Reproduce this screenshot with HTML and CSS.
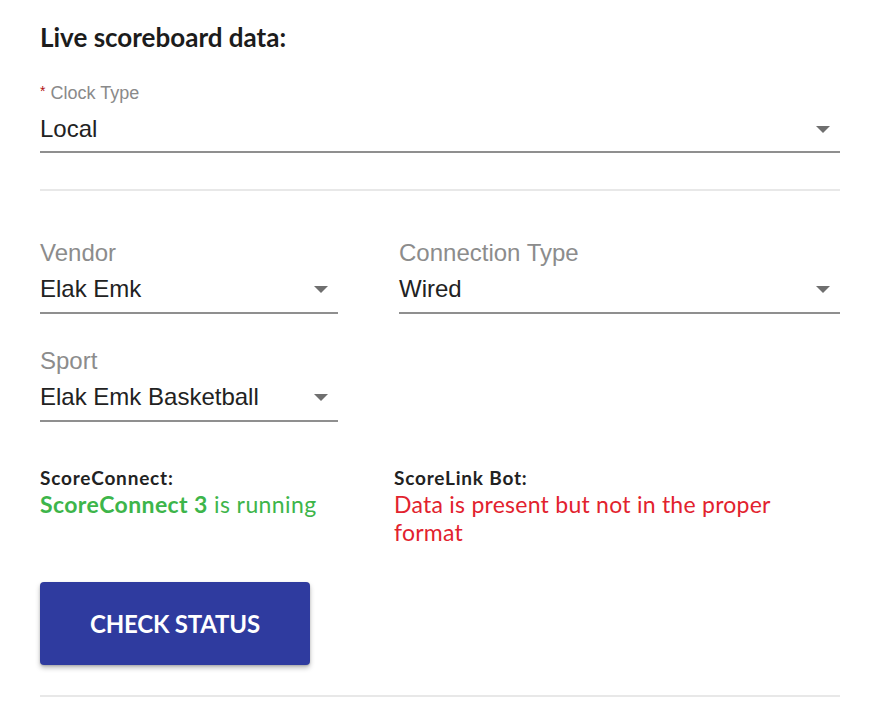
FILE: index.html
```
<!DOCTYPE html>
<html lang="en">
<head>
<meta charset="utf-8">
<title>Live scoreboard data</title>
<link rel="stylesheet" href="styles.css">
</head>
<body>
<div class="page">
  <h2 class="title">Live scoreboard data:</h2>

  <div class="field field-clock">
    <div class="label-small"><span class="req">*</span> Clock Type</div>
    <div class="select">
      <span class="value">Local</span>
      <span class="arrow"></span>
    </div>
  </div>

  <div class="divider divider-top"></div>

  <div class="fields-grid">
    <div class="field">
      <div class="label">Vendor</div>
      <div class="select">
        <span class="value">Elak Emk</span>
        <span class="arrow"></span>
      </div>
    </div>
    <div class="field">
      <div class="label">Connection Type</div>
      <div class="select">
        <span class="value">Wired</span>
        <span class="arrow"></span>
      </div>
    </div>
    <div class="field">
      <div class="label">Sport</div>
      <div class="select">
        <span class="value">Elak Emk Basketball</span>
        <span class="arrow"></span>
      </div>
    </div>
  </div>

  <div class="status-grid">
    <div class="status">
      <div class="status-title">ScoreConnect:</div>
      <div class="status-ok"><strong>ScoreConnect 3</strong> is running</div>
    </div>
    <div class="status">
      <div class="status-title">ScoreLink Bot:</div>
      <div class="status-err">Data is present but not in the proper format</div>
    </div>
  </div>

  <button class="btn">CHECK STATUS</button>

  <div class="divider divider-bottom"></div>
</div>
</body>
</html>
```

FILE: styles.css
```
html, body {
  margin: 0;
  padding: 0;
  background: #ffffff;
}

.page {
  width: 800px;
  padding: 22px 40px 0 40px;
}

.title {
  margin: 0;
  font-family: "Lato", "Liberation Sans", sans-serif;
  font-weight: 700;
  font-size: 26px;
  line-height: 30px;
  color: #1c1c1c;
}

.field {
  display: flex;
  flex-direction: column;
}

.field-clock {
  margin-top: 29px;
}

.label-small {
  font-family: "Liberation Sans", Arial, sans-serif;
  font-size: 18px;
  line-height: 20px;
  color: #8a8a8a;
}

.req {
  color: #b01010;
  font-size: 14px;
  vertical-align: 3px;
}

.label {
  font-family: "Liberation Sans", Arial, sans-serif;
  font-size: 24px;
  line-height: 28px;
  color: #8c8c8c;
}

.select {
  display: flex;
  align-items: center;
  justify-content: space-between;
  padding-bottom: 9px;
  border-bottom: 2px solid #8f8f8f;
}

.field-clock .select {
  margin-top: 12px;
  padding-bottom: 8px;
}

.fields-grid .select {
  margin-top: 8px;
}

.value {
  font-family: "Liberation Sans", Arial, sans-serif;
  font-size: 24px;
  line-height: 28px;
  color: #222222;
}

.arrow {
  width: 0;
  height: 0;
  margin-right: 10px;
  border-left: 7px solid transparent;
  border-right: 7px solid transparent;
  border-top: 7px solid #6f6f6f;
}

.divider {
  height: 2px;
  background: #e8e8e8;
}

.divider-top {
  margin-top: 36px;
}

.fields-grid {
  margin-top: 48px;
  display: grid;
  grid-template-columns: 298px 1fr;
  column-gap: 61px;
  row-gap: 33px;
}

.status-grid {
  margin-top: 44px;
  display: grid;
  grid-template-columns: 354px 1fr;
}

.status {
  font-family: "Lato", "Liberation Sans", sans-serif;
}

.status-title {
  font-weight: 700;
  font-size: 19px;
  letter-spacing: 0.8px;
  line-height: 24px;
  color: #222222;
}

.status-ok {
  font-size: 23px;
  letter-spacing: 0.4px;
  line-height: 28px;
  color: #3db54a;
}

.status-ok strong {
  font-weight: 700;
}

.status-err {
  font-size: 23px;
  letter-spacing: 0.25px;
  line-height: 28px;
  color: #e2222e;
  padding-right: 40px;
}

.btn {
  display: flex;
  align-items: center;
  justify-content: center;
  margin-top: 36px;
  width: 270px;
  height: 83px;
  border: none;
  border-radius: 4px;
  background: #2f3b9f;
  color: #ffffff;
  font-family: "Lato", "Liberation Sans", sans-serif;
  font-weight: 700;
  font-size: 24px;
  letter-spacing: -0.2px;
  box-shadow: 0 3px 5px rgba(0, 0, 0, 0.25), 0 1px 2px rgba(0, 0, 0, 0.15);
}

.divider-bottom {
  margin-top: 30px;
}
```
